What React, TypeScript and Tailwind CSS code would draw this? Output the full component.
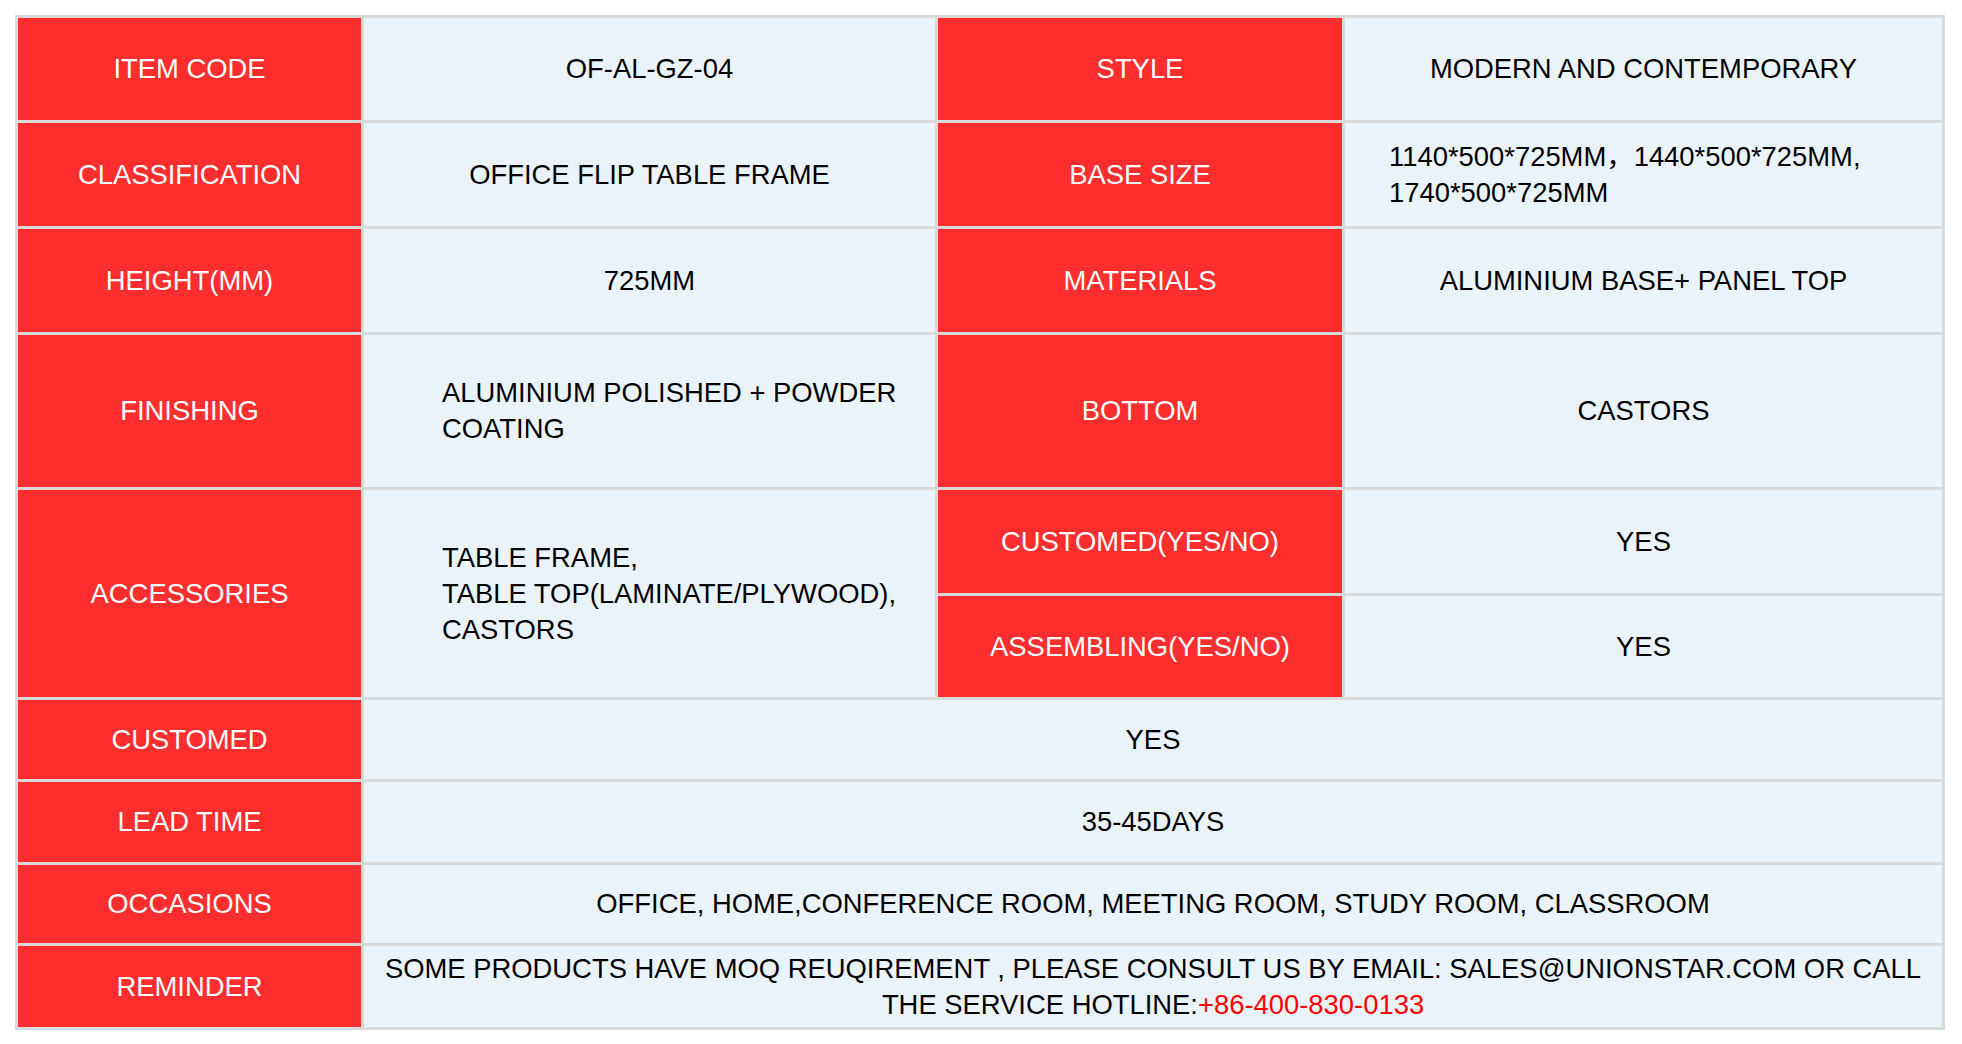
import React from 'react';

const head = 'bg-[#ff2e2e] text-white text-center align-middle font-normal';
const body = 'bg-[#ebf3fa] text-black align-middle';

export default function App() {
  return (
    <div className="min-h-screen bg-white pl-[15px] pt-[15px] font-['Liberation_Sans',Arial,'Noto_Sans_CJK_SC',sans-serif] text-[27.4px] leading-[36px]">
      <table className="w-[1930px] table-fixed border-separate border-spacing-[3px] bg-[#d9d9d9]">
        <colgroup>
          <col className="w-[343px]" />
          <col className="w-[571px]" />
          <col className="w-[404px]" />
          <col className="w-[597px]" />
        </colgroup>
        <tbody>
          <tr className="h-[102px]">
            <td className={head}>ITEM CODE</td>
            <td className={`${body} text-center`}>OF-AL-GZ-04</td>
            <td className={head}>STYLE</td>
            <td className={`${body} text-center`}>MODERN AND CONTEMPORARY</td>
          </tr>
          <tr className="h-[103px]">
            <td className={head}>CLASSIFICATION</td>
            <td className={`${body} text-center`}>OFFICE FLIP TABLE FRAME</td>
            <td className={head}>BASE SIZE</td>
            <td className={`${body} pl-[44px] text-left`}>
              1140*500*725MM，1440*500*725MM,
              <br />
              1740*500*725MM
            </td>
          </tr>
          <tr className="h-[103px]">
            <td className={head}>HEIGHT(MM)</td>
            <td className={`${body} text-center`}>725MM</td>
            <td className={head}>MATERIALS</td>
            <td className={`${body} text-center`}>ALUMINIUM BASE+ PANEL TOP</td>
          </tr>
          <tr className="h-[152px]">
            <td className={head}>FINISHING</td>
            <td className={`${body} pl-[78px] text-left`}>
              ALUMINIUM POLISHED + POWDER
              <br />
              COATING
            </td>
            <td className={head}>BOTTOM</td>
            <td className={`${body} text-center`}>CASTORS</td>
          </tr>
          <tr className="h-[103px]">
            <td rowSpan={2} className={head}>ACCESSORIES</td>
            <td rowSpan={2} className={`${body} pl-[78px] text-left`}>
              TABLE FRAME,
              <br />
              TABLE TOP(LAMINATE/PLYWOOD),
              <br />
              CASTORS
            </td>
            <td className={head}>CUSTOMED(YES/NO)</td>
            <td className={`${body} text-center`}>YES</td>
          </tr>
          <tr className="h-[101px]">
            <td className={head}>ASSEMBLING(YES/NO)</td>
            <td className={`${body} text-center`}>YES</td>
          </tr>
          <tr className="h-[79px]">
            <td className={head}>CUSTOMED</td>
            <td colSpan={3} className={`${body} text-center`}>YES</td>
          </tr>
          <tr className="h-[80px]">
            <td className={head}>LEAD TIME</td>
            <td colSpan={3} className={`${body} text-center`}>35-45DAYS</td>
          </tr>
          <tr className="h-[78px]">
            <td className={head}>OCCASIONS</td>
            <td colSpan={3} className={`${body} text-center`}>
              OFFICE, HOME,CONFERENCE ROOM, MEETING ROOM, STUDY ROOM, CLASSROOM
            </td>
          </tr>
          <tr className="h-[81px]">
            <td className={head}>REMINDER</td>
            <td colSpan={3} className={`${body} text-center`}>
              SOME PRODUCTS HAVE MOQ REUQIREMENT , PLEASE CONSULT US BY EMAIL: SALES@UNIONSTAR.COM OR CALL
              <br />
              THE SERVICE HOTLINE:<span className="text-[#ff0000]">+86-400-830-0133</span>
            </td>
          </tr>
        </tbody>
      </table>
    </div>
  );
}
